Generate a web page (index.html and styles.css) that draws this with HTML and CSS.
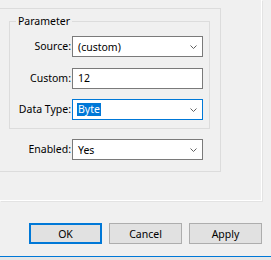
FILE: index.html
```html
<!DOCTYPE html>
<html lang="en">
<head>
    <meta charset="UTF-8">
    <title>Parameter Properties</title>
    <link rel="stylesheet" href="styles.css">
</head>
<body>
    <div class="tab-panel">
        <div class="outer-group">
            <fieldset class="group">
                <legend>Parameter</legend>
                <div class="form-grid">
                    <label>Source:</label>
                    <div class="combo">
                        <span class="value">(custom)</span>
                        <svg class="chevron" width="7" height="4" viewBox="0 0 7 4"><path d="M0.5 0.5 L3.5 3.5 L6.5 0.5" fill="none" stroke="#606060"/></svg>
                    </div>

                    <label>Custom:</label>
                    <div class="combo textbox">
                        <span class="value">12</span>
                    </div>

                    <label>Data Type:</label>
                    <div class="combo focused">
                        <span class="value selected">Byte</span>
                        <svg class="chevron" width="7" height="4" viewBox="0 0 7 4"><path d="M0.5 0.5 L3.5 3.5 L6.5 0.5" fill="none" stroke="#606060"/></svg>
                    </div>
                </div>
            </fieldset>

            <div class="form-grid enabled-row">
                <label>Enabled:</label>
                <div class="combo">
                    <span class="value">Yes</span>
                    <svg class="chevron" width="7" height="4" viewBox="0 0 7 4"><path d="M0.5 0.5 L3.5 3.5 L6.5 0.5" fill="none" stroke="#606060"/></svg>
                </div>
            </div>
        </div>
    </div>

    <div class="buttons">
        <button class="default">OK</button>
        <button>Cancel</button>
        <button>Apply</button>
    </div>

    <div class="window-edge"></div>
</body>
</html>
```

FILE: styles.css
```css
* {
    box-sizing: border-box;
}
body {
    margin: 0;
    width: 271px;
    height: 260px;
    overflow: hidden;
    background-color: #f0f0f0;
    font-family: "Noto Sans", sans-serif;
    font-size: 10.5px;
    color: #000;
}
.tab-panel {
    width: 262px;
    height: 201px;
    padding-top: 8px;
    border-right: 1px solid #fff;
    border-bottom: 1px solid #fff;
    box-shadow: 1px 1px 0 #e3e3e3;
}
.outer-group {
    margin-left: -2px;
    width: 223px;
    height: 164px;
    border: 1px solid #dcdcdc;
}
.group {
    margin: 5px 0 0 10px;
    padding: 0 0 8px 0;
    width: 201px;
    border: 1px solid #dcdcdc;
}
.group legend {
    margin-left: 6px;
    padding: 0 2px;
    line-height: 15px;
}
.form-grid {
    display: grid;
    grid-template-columns: 61px 131px;
    column-gap: 1px;
    row-gap: 10.5px;
    align-items: center;
    margin-top: 7px;
}
label {
    text-align: right;
    line-height: 21px;
}
.combo {
    height: 21px;
    display: flex;
    align-items: center;
    justify-content: space-between;
    padding: 0 5px 0 5px;
    background: #fff;
    border: 1px solid #7a7a7a;
}
.combo.focused {
    border-color: #0078d7;
}
.selected {
    background: #0078d7;
    color: #fff;
    margin-left: -1px;
    padding: 0 1px;
    line-height: 13px;
}
.chevron {
    display: block;
}
.enabled-row {
    margin: 10px 0 0 11px;
}
.buttons {
    display: flex;
    justify-content: flex-end;
    gap: 7px;
    margin-top: 22px;
    padding-right: 9px;
}
button {
    width: 73px;
    height: 21px;
    padding: 0;
    background-color: #e1e1e1;
    border: 1px solid #adadad;
    font-family: inherit;
    font-size: 10.5px;
    color: #000;
}
button.default {
    border: 2px solid #0078d7;
}
.window-edge {
    margin-top: 12px;
    height: 4px;
    border-top: 1px solid #0078d7;
    background-color: #e6e6e6;
}
```
